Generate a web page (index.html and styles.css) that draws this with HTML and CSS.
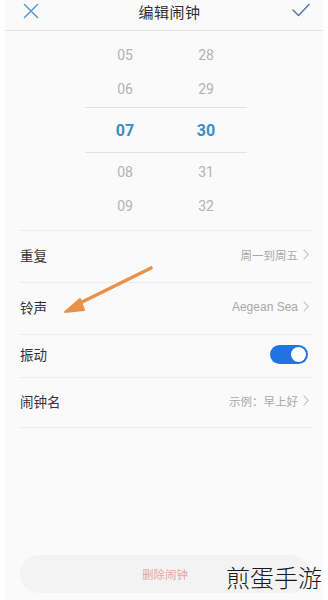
FILE: index.html
```html
<!DOCTYPE html>
<html lang="zh">
<head>
<meta charset="utf-8">
<title>编辑闹钟</title>
<link rel="stylesheet" href="styles.css">
</head>
<body>
<div class="screen">
  <div class="panel">
    <header class="header">
      <svg class="icon-close" width="16" height="16" viewBox="0 0 16 16"><path d="M1.5 1.5 L14.5 14.5 M14.5 1.5 L1.5 14.5" stroke="#5b9fd1" stroke-width="1.6" fill="none" stroke-linecap="round"/></svg>
      <div class="title">编辑闹钟</div>
      <svg class="icon-check" width="18" height="14" viewBox="0 0 18 14"><path d="M1 7 L6.5 12.5 L17 1.5" stroke="#5d7d99" stroke-width="1.6" fill="none" stroke-linecap="round" stroke-linejoin="round"/></svg>
    </header>

    <section class="picker">
      <div class="prow"><span>05</span><span>28</span></div>
      <div class="prow"><span>06</span><span>29</span></div>
      <div class="prow selected"><span>07</span><span>30</span></div>
      <div class="prow"><span>08</span><span>31</span></div>
      <div class="prow"><span>09</span><span>32</span></div>
    </section>

    <section class="list">
      <div class="row r1">
        <span class="label">重复</span>
        <span class="value">周一到周五<svg class="chev" width="6" height="11" viewBox="0 0 6 11"><path d="M0.7 0.7 L5.3 5.5 L0.7 10.3" stroke="#c4c4c4" stroke-width="1.1" fill="none"/></svg></span>
      </div>
      <div class="row r2">
        <span class="label">铃声</span>
        <span class="value latin">Aegean Sea<svg class="chev" width="6" height="11" viewBox="0 0 6 11"><path d="M0.7 0.7 L5.3 5.5 L0.7 10.3" stroke="#c4c4c4" stroke-width="1.1" fill="none"/></svg></span>
      </div>
      <div class="row r3">
        <span class="label">振动</span>
        <span class="toggle"><span class="knob"></span></span>
      </div>
      <div class="row r4">
        <span class="label">闹钟名</span>
        <span class="value">示例：早上好<svg class="chev" width="6" height="11" viewBox="0 0 6 11"><path d="M0.7 0.7 L5.3 5.5 L0.7 10.3" stroke="#c4c4c4" stroke-width="1.1" fill="none"/></svg></span>
      </div>
    </section>

    <div class="spacer"></div>

    <div class="delete">删除闹钟</div>
  </div>

  <svg class="arrow" width="100" height="60" viewBox="0 0 100 60"><path d="M89 6 L10 45" stroke="#e8924c" stroke-width="3.6" stroke-linecap="round" fill="none"/><path d="M3 50 L18 37 L22 48 Z" fill="#e8924c" stroke="#e8924c" stroke-width="2" stroke-linejoin="round"/></svg>

  <div class="watermark">煎蛋手游</div>
</div>
</body>
</html>
```

FILE: styles.css
```css
* { box-sizing: border-box; }
html, body { margin: 0; padding: 0; }
body {
  width: 328px;
  height: 600px;
  overflow: hidden;
  background: #ffffff;
  font-family: "Noto Sans CJK SC", "Noto Sans", sans-serif;
}
.screen {
  position: relative;
  width: 328px;
  height: 600px;
  padding: 0 5px;
}
.panel {
  height: 600px;
  background: #fafafa;
  display: flex;
  flex-direction: column;
}
.header {
  height: 31px;
  padding: 0 13px 7px 18px;
  border-bottom: 1px solid #e4e4e4;
  display: flex;
  align-items: center;
  justify-content: space-between;
}
.icon-close { margin-top: -2px; }
.icon-check { margin-top: -4px; }
.title {
  font-size: 15px;
  color: #2e2e2e;
  letter-spacing: 0.5px;
  margin-left: 8px;
}
.picker {
  padding-top: 7px;
  width: 162px;
  margin-left: 80px;
  display: flex;
  flex-direction: column;
}
.prow {
  height: 34px;
  display: grid;
  grid-template-columns: 80px 80px;
  align-items: center;
  justify-items: center;
  font-family: Roboto, "Liberation Sans", sans-serif;
  font-size: 14px;
  color: #b3b3b3;
}
.prow.selected {
  height: 46px;
  margin: 1px 0 2px;
  border-top: 1px solid #e2e2e2;
  border-bottom: 1px solid #e2e2e2;
  color: #3b8ec2;
  font-size: 16px;
  font-weight: 700;
}
.prow span:last-child { padding-left: 2px; }
.list {
  margin: 7px 11px 0 15px;
  border-top: 1px solid #ededed;
}
.row {
  display: flex;
  align-items: center;
  justify-content: space-between;
  border-bottom: 1px solid #ededed;
  padding: 0 3px 4px 0;
}
.r1 { height: 52px; }
.r2 { height: 52px; }
.r3 { height: 43px; }
.r4 { height: 50px; }
.label {
  font-size: 13.5px;
  color: #333;
}
.value {
  display: flex;
  align-items: center;
  gap: 4px;
  font-size: 11.5px;
  color: #a8a8a8;
}
.value.latin {
  font-family: "Liberation Sans", Arial, sans-serif;
  font-size: 12px;
}
.chev { margin-left: 1px; }
.toggle {
  width: 38px;
  height: 19px;
  border-radius: 10px;
  background: #1f74e2;
  display: flex;
  align-items: center;
  justify-content: flex-end;
  padding-right: 2px;
  margin-right: 1px;
}
.knob {
  width: 15px;
  height: 15px;
  border-radius: 50%;
  background: #fff;
}
.spacer { flex: 1; }
.delete {
  margin: 0 13px 7px 15px;
  height: 38px;
  border-radius: 19px;
  background: #f3f3f3;
  display: flex;
  align-items: center;
  justify-content: center;
  font-size: 11.5px;
  color: #e9a4a0;
}
.arrow {
  position: absolute;
  left: 62px;
  top: 262px;
}
.watermark {
  position: absolute;
  left: 226px;
  top: 561px;
  font-size: 24px;
  font-weight: 300;
  color: #1a1a1a;
  line-height: 32px;
  white-space: nowrap;
}
```
